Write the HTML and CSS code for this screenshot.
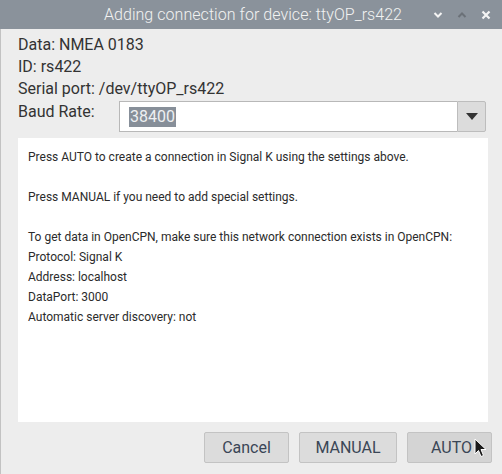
FILE: index.html
```html
<!DOCTYPE html>
<html>
<head>
<meta charset="utf-8">
<link rel="stylesheet" href="styles.css">
</head>
<body>
<div class="window">
  <div class="titlebar">
    <div></div>
    <div class="title">Adding connection for device: ttyOP_rs422</div>
    <div class="controls">
      <svg class="ctl" width="10" height="10" viewBox="0 0 10 10"><path d="M1.5 3 L5 6.5 L8.5 3" fill="none" stroke="#f4f4f4" stroke-width="2"/></svg>
      <svg class="ctl" width="10" height="10" viewBox="0 0 10 10"><path d="M1.5 7 L5 3.5 L8.5 7" fill="none" stroke="#6b7178" stroke-width="2"/></svg>
      <svg class="ctl" width="10" height="10" viewBox="0 0 10 10"><path d="M1.5 1.5 L8.5 8.5 M8.5 1.5 L1.5 8.5" fill="none" stroke="#f4f4f4" stroke-width="2.2"/></svg>
    </div>
  </div>
  <div class="content">
    <div class="info">
      <div class="line">Data: NMEA 0183</div>
      <div class="line">ID: rs422</div>
      <div class="line">Serial port: /dev/ttyOP_rs422</div>
    </div>
    <div class="baud-row">
      <div class="baud-label">Baud Rate:</div>
      <div class="combo">
        <div class="entry"><span class="sel">38400</span></div>
        <div class="drop"><svg width="12" height="7" viewBox="0 0 12 7"><path d="M0 0 H12 L6 7 Z" fill="#333"/></svg></div>
      </div>
    </div>
    <div class="textbox">
      <div class="tline">Press AUTO to create a connection in Signal K using the settings above.</div>
      <div class="tline">&nbsp;</div>
      <div class="tline">Press MANUAL if you need to add special settings.</div>
      <div class="tline">&nbsp;</div>
      <div class="tline">To get data in OpenCPN, make sure this network connection exists in OpenCPN:</div>
      <div class="tline">Protocol: Signal K</div>
      <div class="tline">Address: localhost</div>
      <div class="tline">DataPort: 3000</div>
      <div class="tline">Automatic server discovery: not</div>
    </div>
    <div class="buttons">
      <button class="btn btn-cancel">Cancel</button>
      <button class="btn btn-manual">MANUAL</button>
      <button class="btn btn-auto">AUTO
        <svg class="cursor" width="14" height="21" viewBox="0 0 14 21"><path d="M1 1 L1 16 L4.5 12.5 L7 18.5 L9.5 17.5 L7 11.5 L12 11.5 Z" fill="#1a1a1a" stroke="#fff" stroke-width="1" stroke-linejoin="round"/></svg>
      </button>
    </div>
  </div>
</div>
</body>
</html>
```
FILE: styles.css
```css
* { box-sizing: border-box; }
html, body {
  margin: 0;
  padding: 0;
  width: 502px;
  height: 474px;
  overflow: hidden;
  font-family: Roboto, "Liberation Sans", sans-serif;
}
.window {
  width: 502px;
  height: 474px;
  background: #ededed;
  border-left: 1px solid #c2c2c2;
  display: flex;
  flex-direction: column;
}
.titlebar {
  height: 29px;
  background: #8a929b;
  display: grid;
  grid-template-columns: 1fr auto 1fr;
  align-items: center;
  margin-left: -1px;
}
.title {
  color: #f2f2f2;
  font-size: 16px;
  font-weight: 300;
  letter-spacing: 0.05px;
  padding-left: 4px;
}
.controls {
  display: flex;
  justify-content: flex-end;
  align-items: center;
  gap: 14px;
  padding-right: 11px;
}
.ctl { display: block; }
.content {
  flex: 1;
  display: flex;
  flex-direction: column;
  padding: 5px 15px 0 17px;
}
.info .line {
  font-size: 16px;
  line-height: 22px;
  color: #333;
}
.baud-row {
  display: flex;
  align-items: flex-start;
  margin-top: 0;
}
.baud-label {
  width: 101px;
  font-size: 16px;
  line-height: 22px;
  padding-top: 1px;
  color: #333;
}
.combo {
  display: flex;
  height: 31px;
  margin-top: 1px;
}
.entry {
  width: 338px;
  height: 31px;
  background: #fff;
  border: 1px solid #b8b8b8;
  border-right: none;
  display: flex;
  align-items: center;
  padding-left: 9px;
}
.sel {
  background: #878f99;
  color: #eef0f2;
  font-size: 16px;
  line-height: 20px;
  padding: 0 1px;
}
.drop {
  width: 29px;
  height: 31px;
  background: #dcdcdc;
  border: 1px solid #bdbdbd;
  border-radius: 0 2px 2px 0;
  display: flex;
  align-items: center;
  justify-content: center;
}
.textbox {
  margin-top: 6px;
  margin-right: 0;
  width: 470px;
  height: 284px;
  background: #fff;
  padding: 9px 10px;
}
.tline {
  font-size: 12px;
  line-height: 20px;
  color: #2b2b2b;
  white-space: nowrap;
}
.buttons {
  display: flex;
  justify-content: flex-end;
  gap: 10px;
  margin-top: 10px;
  margin-right: -5px;
}
.btn {
  position: relative;
  height: 31px;
  background: #dcdcdc;
  border: 1px solid #c3c3c3;
  border-radius: 2px;
  font-family: Roboto, "Liberation Sans", sans-serif;
  font-size: 16px;
  color: #3a4656;
  padding: 0;
}
.btn-cancel { width: 85px; }
.btn-manual { width: 98px; }
.btn-auto { width: 85px; background: #d4d4d4; padding-left: 4px; }
.cursor {
  position: absolute;
  left: 66px;
  top: 5px;
}
```
